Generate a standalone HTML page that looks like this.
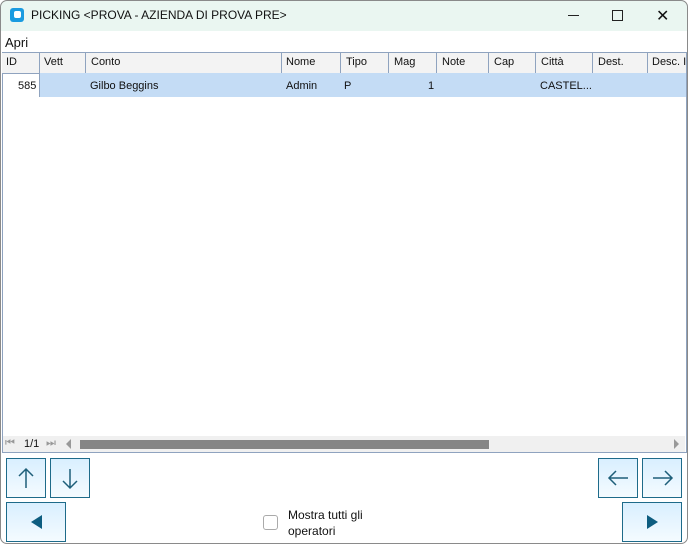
<!DOCTYPE html>
<html><head><style>
body{margin:0;width:688px;height:544px;overflow:hidden;font-family:"Liberation Sans",sans-serif;background:#fff;position:relative}
.abs{position:absolute}
.win{left:0;top:0;width:686px;height:542px;border:1px solid #8a8a8a;border-radius:7px}
.title{left:0;top:0;width:688px;height:31px;background:#eaf6f1;border-radius:7px 7px 0 0}
.t{font-size:12px;color:#111}
.hdr{top:52px;height:20px;background:#f3f3f3;border-top:1px solid #8fa3bf;border-bottom:1px solid #8fa3bf}
.col{top:52px;height:21px;border-left:1px solid #8fa3bf}
.ht{top:56px;font-size:11px;color:#111}
.dt{top:80px;font-size:11px;color:#111}
.btn{background:linear-gradient(#d9efff,#f4fbff);border:1px solid #1e6b8a;box-sizing:border-box}
</style></head><body>
<div class="abs title"></div>
<div class="abs" style="left:10px;top:8px;width:14px;height:14px;background:#1a9be0;border-radius:3px"></div>
<div class="abs" style="left:14px;top:11px;width:7px;height:7px;background:#fff;border-radius:2px"></div>
<div class="abs t" style="left:31px;top:8px">PICKING &lt;PROVA - AZIENDA DI PROVA PRE&gt;</div>
<div class="abs" style="left:568px;top:15px;width:11px;height:1px;background:#222"></div>
<div class="abs" style="left:612px;top:10px;width:9px;height:9px;border:1px solid #222"></div>
<div class="abs t" style="left:656px;top:6px;font-size:16px">✕</div>
<div class="abs t" style="left:5px;top:35px;font-size:13px">Apri</div>
<div class="abs" style="left:2px;top:52px;width:683px;height:400px;border:1px solid #8fa3bf;border-top:none"></div>
<div class="abs hdr" style="left:2px;width:684px"></div>
<div class="abs" style="left:39px;top:73px;width:647px;height:24px;background:#c4dcf5"></div>
<div class="abs col" style="left:39px"></div><div class="abs col" style="left:85px"></div><div class="abs col" style="left:281px"></div><div class="abs col" style="left:340px"></div><div class="abs col" style="left:388px"></div><div class="abs col" style="left:436px"></div><div class="abs col" style="left:488px"></div><div class="abs col" style="left:535px"></div><div class="abs col" style="left:592px"></div><div class="abs col" style="left:647px"></div>
<div class="abs col" style="left:39px;top:73px;height:24px"></div>
<div class="abs ht" style="left:6px">ID</div><div class="abs ht" style="left:44px">Vett</div><div class="abs ht" style="left:91px">Conto</div><div class="abs ht" style="left:286px">Nome</div><div class="abs ht" style="left:346px">Tipo</div><div class="abs ht" style="left:394px">Mag</div><div class="abs ht" style="left:442px">Note</div><div class="abs ht" style="left:494px">Cap</div><div class="abs ht" style="left:541px">Città</div><div class="abs ht" style="left:598px">Dest.</div><div class="abs ht" style="left:652px;white-space:nowrap">Desc. I</div>
<div class="abs dt" style="left:18px">585</div><div class="abs dt" style="left:90px">Gilbo Beggins</div><div class="abs dt" style="left:286px">Admin</div><div class="abs dt" style="left:344px">P</div><div class="abs dt" style="left:428px">1</div><div class="abs dt" style="left:540px">CASTEL...</div>
<div class="abs" style="left:3px;top:436px;width:682px;height:16px;background:#f0f0f0"></div>
<div class="abs" style="left:5px;top:437px;font-size:11px;color:#999">⏮</div>
<div class="abs" style="left:24px;top:438px;font-size:11px;color:#111">1/1</div>
<div class="abs" style="left:46px;top:437px;font-size:11px;color:#999">⏭</div>
<div class="abs" style="left:66px;top:439px;width:0;height:0;border-top:5px solid transparent;border-bottom:5px solid transparent;border-right:5px solid #999"></div>
<div class="abs" style="left:80px;top:440px;width:409px;height:9px;background:#858585"></div>
<div class="abs" style="left:674px;top:439px;width:0;height:0;border-top:5px solid transparent;border-bottom:5px solid transparent;border-left:5px solid #999"></div>
<div class="abs btn" style="left:6px;top:458px;width:40px;height:40px"></div>
<div class="abs btn" style="left:50px;top:458px;width:40px;height:40px"></div>
<div class="abs btn" style="left:598px;top:458px;width:40px;height:40px"></div>
<div class="abs btn" style="left:642px;top:458px;width:40px;height:40px"></div>
<div class="abs btn" style="left:6px;top:502px;width:60px;height:40px"></div>
<div class="abs btn" style="left:622px;top:502px;width:60px;height:40px"></div>
<svg class="abs" style="left:0;top:0" width="688" height="544" fill="none" stroke="#1e5f7a" stroke-width="1.5">
<path d="M26 469V488M19 476L26 469L33 476"/>
<path d="M70 469V488M63 481L70 488L77 481"/>
<path d="M609 478H628M616 471L609 478L616 485"/>
<path d="M653 478H672M665 471L672 478L665 485"/>
<path d="M42 515V529L31 522Z" fill="#0d5d80" stroke="none"/>
<path d="M647 515V529L658 522Z" fill="#0d5d80" stroke="none"/>
</svg>
<div class="abs" style="left:263px;top:515px;width:13px;height:13px;border:1px solid #aaa;border-radius:3px"></div>
<div class="abs" style="left:288px;top:507px;font-size:12px;color:#111;line-height:16px">Mostra tutti gli<br>operatori</div>
<div class="abs win"></div>
</body></html>
